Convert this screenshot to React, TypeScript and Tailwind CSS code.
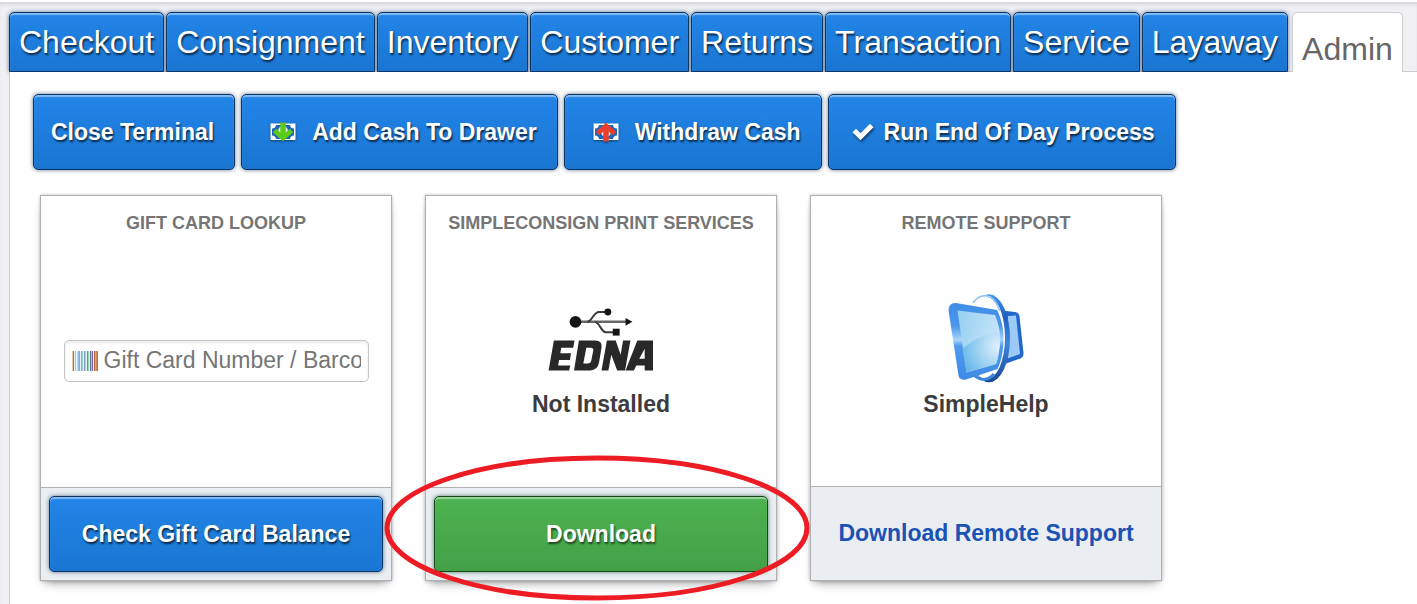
import type { ReactNode } from "react";

const blueFace =
  "border border-[#0b3566] bg-linear-to-b from-[#2285e8] to-[#1a75d2] text-white text-shadow-[1px_2px_2px_rgba(0,0,0,0.7)] shadow-[inset_0_2px_1px_rgba(255,255,255,0.45),0_0_4px_rgba(10,50,90,0.65)]";
const greenFace =
  "border border-[#124a18] bg-linear-to-b from-[#4db350] to-[#43a047] text-white text-shadow-[1px_2px_2px_rgba(0,0,0,0.6)] shadow-[inset_0_2px_1px_rgba(255,255,255,0.45),0_0_4px_rgba(10,60,30,0.65)]";

const tabs = [
  "Checkout",
  "Consignment",
  "Inventory",
  "Customer",
  "Returns",
  "Transaction",
  "Service",
  "Layaway",
];

function CashIcon({ direction }: { direction: "in" | "out" }) {
  const out = direction === "out";
  return (
    <svg width="26" height="20" viewBox="0 0 26 20" aria-hidden="true" className="drop-shadow-[0_1px_1px_rgba(0,0,0,0.5)]">
      <rect x="0.5" y="1.5" width="25" height="16.500" fill="#fff" />
      <path d="M6 3h14a4 4 0 0 0 4 3.500v7a4 4 0 0 0-4 3.500H6a4 4 0 0 0-4-3.500v-7A4 4 0 0 0 6 3z" fill="#1c66b8" />
      <ellipse cx="13" cy="9.500" rx="5" ry="5.500" fill="#e4ecf5" />
      <g
        fill="none"
        stroke={out ? "#ea3f2c" : "#5ccb18"}
        strokeWidth="5"
        transform={out ? "rotate(180 13 10)" : undefined}
      >
        <path d="M13 0.500V16" strokeWidth="5.500" strokeLinecap="butt" />
        <path d="M4.500 8.500 13 16l8.500-7.500" strokeLinejoin="miter" />
      </g>
    </svg>
  );
}

function CheckIcon() {
  return (
    <svg width="22" height="18" viewBox="0 0 22 18" aria-hidden="true" className="drop-shadow-[1px_2px_1px_rgba(0,0,0,0.5)]">
      <path d="M.5 9.200 4 5.700l4.500 4.500L18 .7l3.500 3.500L8.500 17.200z" fill="#fff" />
    </svg>
  );
}

const bars: [number, string][] = [
  [0, "#e3c9a8"],
  [1, "#7d7fa0"],
  [3, "#c9b8c8"],
  [5, "#e8d4bd"],
  [6, "#8bbfe8"],
  [7, "#7fb0de"],
  [9, "#a8a8b0"],
  [10, "#8fd0d8"],
  [12, "#8a9ab8"],
  [13, "#9fd4ee"],
  [15, "#7e8f86"],
  [16, "#8fdcb0"],
  [18, "#5f6f9f"],
  [19, "#d8b0a0"],
  [20, "#8a6a9a"],
  [22, "#b5674a"],
  [23, "#8fc49a"],
  [24, "#d08a5a"],
  [25, "#8577b0"],
];

function BarcodeIcon() {
  return (
    <svg width="26" height="20" viewBox="0 0 26 20" aria-hidden="true" className="shrink-0">
      <rect width="26" height="20" fill="#eceff4" />
      {bars.map(([x, c]) => (
        <rect key={x} x={x} y="0" width="1" height="20" fill={c} />
      ))}
    </svg>
  );
}

function EdnaLogo() {
  return (
    <svg width="106" height="66" viewBox="0 0 108 66" role="img" aria-label="EDNA">
      <g fill="none" stroke="#3a3a3a" strokeWidth="2">
        <path d="M28 14.500h52" stroke="#666" strokeWidth="2.500" />
        <path d="M40 14.500c5 0 6-10 12-10h9" />
        <path d="M48 14.500c5 1 6 10.500 11 10.500h10" />
      </g>
      <g fill="#151515">
        <circle cx="28" cy="14.500" r="6" />
        <circle cx="61" cy="4.500" r="3.500" />
        <path d="M79 10.500l7 4-7 4z" />
        <rect x="66" y="21.500" width="7" height="7" />
      </g>
      <g fill="#282828" fillRule="evenodd">
        <path d="M6 33.500h21l-1.300 7.500H13.500l-1 5.500h11l-1.200 7h-11l-1 5.500h12.500L21.500 64H.6z" />
        <path d="M31.500 33.500H48q7.500 0 6.600 7L52 56q-1.400 8-9 8H26.500zM39 41l-3 16h4.500q3 0 3.600-3l2-10q.5-3-2.500-3z" />
        <path d="M60 33.500h9l5 14.500 2.500-14.500h7.500L78.500 64h-8l-6-16-3 16H54.500z" />
        <path d="M91 33.500h16V64h-8.500v-5H90l-2.500 5h-8.500zM98.500 42 93 52h5.500z" />
      </g>
    </svg>
  );
}

function SimpleHelpLogo() {
  return (
    <svg width="76" height="89" viewBox="0 0 76 89" role="img" aria-label="SimpleHelp logo">
      <defs>
        <linearGradient id="frame" x1="0" y1="0" x2="0" y2="1">
          <stop offset="0" stopColor="#3f8ee6" />
          <stop offset="0.300" stopColor="#4a97ea" />
          <stop offset="0.480" stopColor="#a9d5fb" />
          <stop offset="0.560" stopColor="#4f9bee" />
          <stop offset="1" stopColor="#3d8ae6" />
        </linearGradient>
        <linearGradient id="glass" x1="0" y1="0" x2="1" y2="0.400">
          <stop offset="0" stopColor="#93d0ee" />
          <stop offset="1" stopColor="#c8e4fb" />
        </linearGradient>
        <radialGradient id="glow" cx="0.950" cy="0.350" r="1">
          <stop offset="0" stopColor="#e2f0fe" />
          <stop offset="1" stopColor="#66b8e8" />
        </radialGradient>
        <linearGradient id="ring" x1="0" y1="0" x2="0" y2="1">
          <stop offset="0" stopColor="#4a98e6" />
          <stop offset="0.250" stopColor="#1f5fc0" />
          <stop offset="0.550" stopColor="#3f86de" />
          <stop offset="1" stopColor="#174a94" />
        </linearGradient>
      </defs>
      <path d="M54 16.500l13 1.500q4 .5 4.500 4.500L75.500 59q.2 4-3.300 5.500L54 71z" fill="#2268cc" />
      <path d="M60 22l8-.5L72 60l-12.500 4.500z" fill="#9ccaf6" />
      <ellipse cx="41" cy="44.300" rx="21" ry="44" fill="url(#ring)" />
      <ellipse cx="38.500" cy="43.500" rx="18.500" ry="42" fill="#fff" />
      <path d="M25 9C33-3 46 0 52 17" fill="none" stroke="#8cc2f5" strokeWidth="1.500" />
      <path d="M26 81c6 6 14 6 20-1" fill="none" stroke="#3f86de" strokeWidth="3" />
      <path
        d="M8 9l41 7c4 8 6.500 17 6.500 28 0 12-2 23-6 31L18 85.500q-6 1.500-7.500-4L.6 17Q.5 8.500 8 9z"
        fill="url(#frame)"
      />
      <path d="M9.500 16.500 47 21c3 7 5 15 5 23 0 10-1.500 19-4 26L18.500 78.500z" fill="url(#glass)" />
      <path d="M14.500 55Q29 41 52 38.500C52.500 50 51 61 48 70L18.500 78.500z" fill="url(#glow)" />
    </svg>
  );
}

function Card({ title, footer, children }: { title: string; footer: ReactNode; children: ReactNode }) {
  return (
    <section className="flex w-[352px] flex-col border border-[#b0b0b0] bg-white shadow-[0_6px_10px_-5px_rgba(0,0,0,0.45),0_0_3px_rgba(0,0,0,0.25)]">
      <h2 className="pt-[14px] text-center text-[18px] leading-[26px] font-bold text-[#757575] uppercase">{title}</h2>
      <div className="flex grow flex-col items-center justify-center">{children}</div>
      <footer className="border-t border-[#b0b0b0] bg-[#eaeef2]">{footer}</footer>
    </section>
  );
}

const actionClass = "flex h-[76px] items-center justify-center rounded-[5px] text-[23px] font-bold";

export default function App() {
  return (
    <div className="min-h-screen border-t-2 border-white bg-[#efeff4] pl-[9px] font-['Liberation_Sans',Arial,sans-serif] shadow-[inset_0_4px_4px_-2px_rgba(0,0,0,0.12)]">
      <nav className="flex items-end gap-[2px] border-b border-[#ccc] pt-[10px]">
        {tabs.map((t) => (
          <a key={t} href="#" className={`-mb-px h-[60px] rounded-t-[5px] px-[9px] text-[32px] leading-[58px] ${blueFace}`}>
            {t}
          </a>
        ))}
        <a
          href="#"
          aria-current="page"
          className="-mb-px ml-[2px] h-[60px] rounded-t-[5px] border border-b-0 border-[#ccc] bg-white px-[9px] pt-[7px] text-[32px] leading-[58px] text-[#666]"
        >
          Admin
        </a>
      </nav>
      <main className="relative min-h-[532px] overflow-hidden border-l border-[#ccc] bg-white pt-[22px] pl-[23px]">
        <div className="flex flex-wrap gap-[6px]">
          <button className={`${actionClass} pr-[20px] pl-[17px] ${blueFace}`}>Close Terminal</button>
          <button className={`${actionClass} gap-4 pr-[20px] pl-[28px] ${blueFace}`}>
            <CashIcon direction="in" />
            Add Cash To Drawer
          </button>
          <button className={`${actionClass} gap-4 pr-[20px] pl-[28px] ${blueFace}`}>
            <CashIcon direction="out" />
            Withdraw Cash
          </button>
          <button className={`${actionClass} gap-[10px] pr-[20px] pl-[23px] ${blueFace}`}>
            <CheckIcon />
            Run End Of Day Process
          </button>
        </div>
        <div className="mt-[25px] ml-[7px] flex h-[386px] gap-[33px]">
          <Card
            title="Gift Card Lookup"
            footer={
              <div className="p-2">
                <button className={`${actionClass} w-full ${blueFace}`}>Check Gift Card Balance</button>
              </div>
            }
          >
            <label className="mb-[2px] flex h-[42px] w-[305px] items-center gap-[6px] rounded-[5px] border border-[#c4c4c4] px-[7px] shadow-[inset_0_2px_3px_rgba(0,0,0,0.08)]">
              <BarcodeIcon />
              <input
                type="text"
                aria-label="Gift card number"
                placeholder="Gift Card Number / Barcode"
                className="w-full min-w-0 bg-transparent text-[23px] outline-none placeholder:text-[#757575]"
              />
            </label>
          </Card>
          <Card
            title="SimpleConsign Print Services"
            footer={
              <div className="p-2">
                <button className={`${actionClass} w-full ${greenFace}`}>Download</button>
              </div>
            }
          >
            <div className="flex flex-col items-center pt-[3px]">
              <EdnaLogo />
              <p className="mt-[15px] text-[23px] leading-[32px] font-bold text-[#3c3c40]">Not Installed</p>
            </div>
          </Card>
          <Card
            title="Remote Support"
            footer={
              <a href="#" className="flex h-[93px] items-center justify-center text-[23px] font-bold text-[#1a52b5]">
                Download Remote Support
              </a>
            }
          >
            <div className="flex flex-col items-center pb-[9px]">
              <SimpleHelpLogo />
              <p className="mt-[5px] text-[23px] leading-[32px] font-bold text-[#3c3c40]">SimpleHelp</p>
            </div>
          </Card>
        </div>
        <svg
          width="426"
          height="146"
          viewBox="0 0 426 146"
          aria-hidden="true"
          className="pointer-events-none absolute top-[383px] left-[374px]"
        >
          <ellipse cx="213" cy="73" rx="210" ry="70" fill="none" stroke="#ed1c24" strokeWidth="5" />
        </svg>
      </main>
    </div>
  );
}
